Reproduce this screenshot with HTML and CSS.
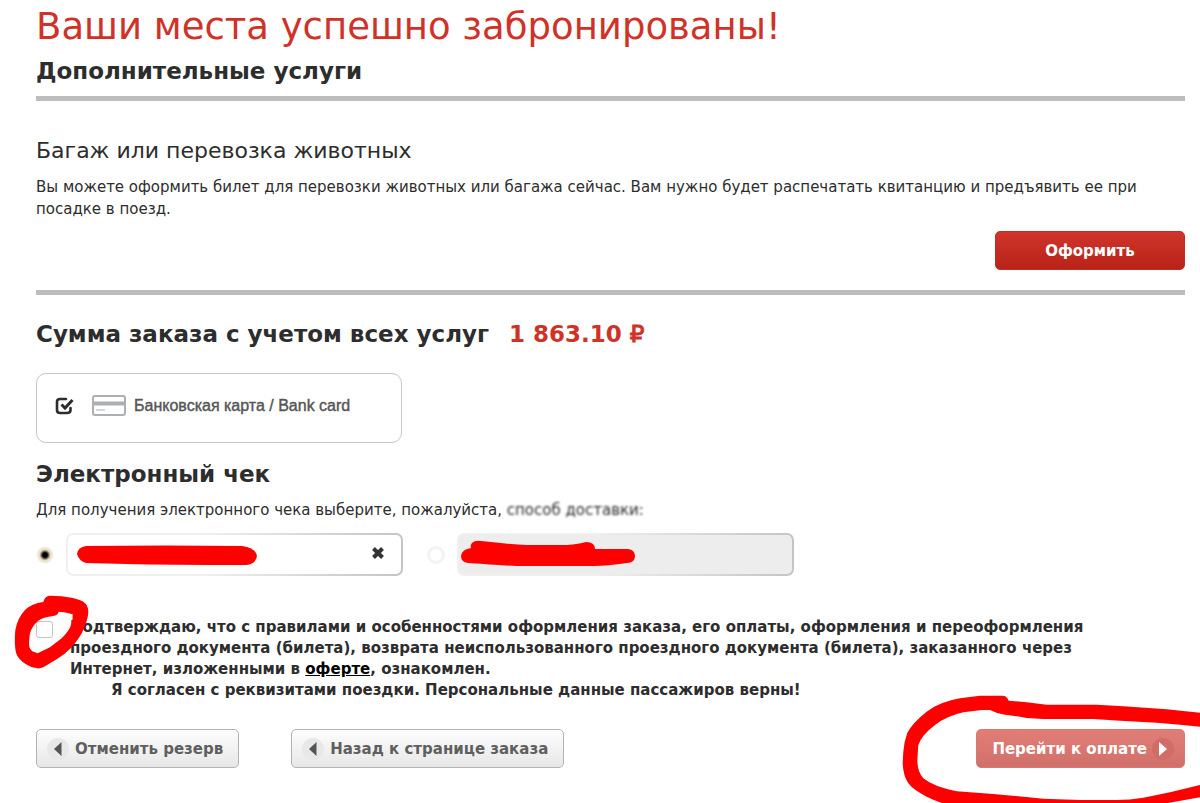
FILE: index.html
```html
<!DOCTYPE html>
<html lang="ru">
<head>
    <meta charset="UTF-8">
    <meta name="viewport" content="width=device-width, initial-scale=1.0">
    <title>Оплата заказа</title>
    <link rel="stylesheet" href="styles.css">
</head>
<body>
    <main class="page">
        <h1>Ваши места успешно забронированы!</h1>
        <h2>Дополнительные услуги</h2>

        <section class="extra">
            <h3>Багаж или перевозка животных</h3>
            <p>Вы можете оформить билет для перевозки животных или багажа сейчас. Вам нужно будет распечатать квитанцию и предъявить ее при посадке в поезд.</p>
            <div class="extra-actions">
                <button class="btn btn-red btn-wide" type="button">Оформить</button>
            </div>
        </section>

        <div class="total">
            <h2>Сумма заказа с учетом всех услуг</h2>
            <strong>1 863.10 <span class="rub">₽</span></strong>
        </div>

        <label class="bank-card">
            <input type="checkbox" class="bank-check" checked>
            <svg class="check-icon" width="20" height="18" viewBox="0 0 20 18" fill="none" stroke="#2d2d2d">
                <path d="M11 2H5Q2 2 2 5V13Q2 16 5 16H12Q15.500 16 15.500 13V11" stroke-width="2.600" stroke-linecap="round"/>
                <path d="M6.500 7.500L10 11L17.500 3" stroke-width="3"/>
            </svg>
            <svg class="card-icon" width="34" height="21" viewBox="0 0 34 21">
                <rect x="1" y="1" width="32" height="19" rx="2" fill="#fff" stroke="#adafb2" stroke-width="2"/>
                <path d="M2 8.500H32" stroke="#adafb2" stroke-width="4"/>
                <path d="M4 15H13" stroke="#c9cacc" stroke-width="1.500"/>
            </svg>
            <span>Банковская карта / Bank card</span>
        </label>

        <h2>Электронный чек</h2>
        <p class="hint">Для получения электронного чека выберите, пожалуйста, <span class="soft">способ доставки:</span></p>

        <div class="delivery">
            <div class="option">
                <input type="radio" name="delivery" class="radio" aria-label="Первый способ" checked>
                <div class="field">
                    <input type="text" class="text-input" aria-label="Первый адрес">
                    <button class="clear" type="button" aria-label="Очистить">
                        <svg width="14" height="14" viewBox="0 0 14 14"><path d="M2.500 2.500L11.500 11.500M11.500 2.500L2.500 11.500" stroke="#333" stroke-width="4"/></svg>
                    </button>
                    <svg class="scribble" width="200" height="34" viewBox="0 0 200 34">
                        <path d="M20 13Q100 12 176 13Q190 15 191 23Q190 31 180 32Q100 32 60 31L20 30Q13 28 11 21Q12 14 20 13Z" fill="#f00"/>
                    </svg>
                </div>
            </div>
            <div class="option">
                <input type="radio" name="delivery" class="radio" aria-label="Второй способ">
                <div class="field">
                    <input type="text" class="text-input disabled" aria-label="Второй адрес" disabled>
                    <svg class="scribble" width="200" height="34" viewBox="0 0 200 34">
                        <path d="M15 10Q18 7 24 8Q50 11 70 12H110Q122 11 129 9Q138 9 138 16H171Q178 17 178 23Q178 30 170 30Q150 33 137 33H60Q37 32 27 31L11 30Q4 29 4 23Q5 16 14 15Q13 12 15 10Z" fill="#f00"/>
                    </svg>
                </div>
            </div>
        </div>

        <div class="agree">
            <input type="checkbox" id="agree" class="agree-check">
            <div class="agree-text">
                <label for="agree">Подтверждаю, что с правилами и особенностями оформления заказа, его оплаты, оформления и переоформления проездного документа (билета), возврата неиспользованного проездного документа (билета), заказанного через Интернет, изложенными в <a href="#offer">оферте</a>, ознакомлен.</label>
                <p>Я согласен с реквизитами поездки. Персональные данные пассажиров верны!</p>
            </div>
            <svg class="mark-check" width="90" height="80" viewBox="0 0 270 240">
                <path fill="#f00" fill-rule="evenodd" d="M133 28Q138 18 150 17Q185 17 215 23Q240 28 251 36Q266 46 265 68Q263 93 246 128Q234 150 212 175Q193 195 170 208L135 229Q125 236 112 235Q92 233 78 223Q53 206 48 188Q42 160 46 120Q52 85 75 60Q95 40 130 36ZM160 78Q130 82 115 92Q96 108 90 130Q86 155 88 170Q90 179 97 184L113 190L150 172L185 145Q208 122 213 105Q220 88 218 73Q195 65 176 65Q173 76 160 78Z"/>
            </svg>
        </div>

        <div class="actions">
            <button class="btn btn-grey" type="button">
                <svg width="22" height="22" viewBox="0 0 22 22"><circle cx="11" cy="11" r="11" fill="#e8e8e8"/><path d="M14.500 4V18L7 11Z" fill="#555"/></svg>
                Отменить резерв
            </button>
            <button class="btn btn-grey" type="button">
                <svg width="22" height="22" viewBox="0 0 22 22"><circle cx="11" cy="11" r="11" fill="#e8e8e8"/><path d="M14.500 4V18L7 11Z" fill="#555"/></svg>
                Назад к странице заказа
            </button>
            <div class="pay">
                <button class="btn btn-pay" type="button">
                    Перейти к оплате
                    <svg width="22" height="22" viewBox="0 0 22 22"><circle cx="11" cy="11" r="11" fill="#d16c66"/><path d="M7 4V18L15 11Z" fill="#fff"/></svg>
                </button>
                <svg class="mark-pay" width="320" height="123" viewBox="0 0 960 369">
                    <path fill="#f00" d="M960 98L860 88L730 79L650 74H500L440 67L386 62Q380 47 368 47H300L240 55Q180 65 140 95Q98 128 82 158Q72 185 70 215L68 250Q70 290 85 310Q100 330 140 350Q175 367 205 375H830L960 352V315L870 337L790 353Q750 360 710 360H600L490 356L340 342L230 334Q160 320 130 295Q112 275 112 240L115 195Q125 165 165 135Q200 108 250 97L305 90H330Q350 101 375 104Q400 106 440 114L490 117H640L720 122L830 128L900 134L960 140Z"/>
                </svg>
            </div>
        </div>
    </main>
</body>
</html>
```
FILE: styles.css
```css
* {
    box-sizing: border-box;
}

body {
    font-family: "DejaVu Sans", Verdana, sans-serif;
    font-size: 15px;
    line-height: 22px;
    margin: 0;
    color: #2d2d2d;
    background-color: #fff;
    overflow: hidden;
}

.page {
    padding: 3px 15px 35px 36px;
}

h1, h2, h3, p {
    margin: 0;
}

h1 {
    font-size: 37px;
    line-height: 48px;
    font-weight: normal;
    color: #d03228;
}

h2 {
    font-size: 23px;
    line-height: 40px;
    font-weight: bold;
}

h3 {
    font-size: 22px;
    line-height: 40px;
    font-weight: normal;
    margin-bottom: 5px;
}

.extra {
    margin-top: 5px;
    padding: 30px 0 20px;
    border-top: 5px solid #bdbdbd;
    border-bottom: 5px solid #bdbdbd;
}

.extra-actions {
    display: flex;
    justify-content: flex-end;
    margin-top: 11px;
}

.btn {
    display: flex;
    align-items: center;
    justify-content: center;
    gap: 6px;
    height: 39px;
    padding: 0 15px 0 10px;
    border-radius: 5px;
    font-family: inherit;
    font-size: 15px;
    font-weight: bold;
    white-space: nowrap;
    cursor: pointer;
}

.btn-red {
    padding: 0 10px;
    color: #fff;
    border: 1px solid #c5291f;
    background: linear-gradient(#d0342b, #b82318);
}

.btn-wide {
    width: 190px;
}

.btn-grey {
    color: #5f5f5f;
    border: 1px solid #b3b3b3;
    background: linear-gradient(#fdfdfd, #e7e7e7);
}

.btn-pay {
    gap: 5px;
    color: #fff;
    padding: 0 10px 0 15px;
    border: 1px solid #dc7770;
    background: linear-gradient(#e27d77, #d0706a);
}

.total {
    display: flex;
    align-items: center;
    gap: 20px;
    margin: 19px 0;
}

.total strong {
    font-size: 23px;
    color: #d03228;
}

.rub {
    font-weight: normal;
    -webkit-text-stroke: 1px #d03228;
}

.bank-card {
    display: flex;
    align-items: center;
    position: relative;
    width: 366px;
    height: 70px;
    margin-bottom: 11px;
    padding: 0 18px 5px;
    border: 1px solid #c6c6c6;
    border-radius: 10px;
    font-family: "Liberation Sans", Arial, sans-serif;
    font-size: 16px;
    color: #555;
    -webkit-text-stroke: 0.4px #555;
}

.bank-check {
    position: absolute;
    opacity: 0;
}

.card-icon {
    margin: 0 8px 0 17px;
}

.soft {
    filter: blur(1px);
}

.hint {
    margin-top: 5px;
}

.delivery {
    display: flex;
    gap: 24px;
    margin-top: 12px;
}

.option {
    display: flex;
    align-items: center;
    gap: 12px;
}

.radio {
    appearance: none;
    width: 18px;
    height: 18px;
    margin: 0;
    border: 3px solid #f3f3f3;
    border-radius: 50%;
}

.radio:checked {
    border: 0;
    background: radial-gradient(circle closest-side, #000 25%, #897f6d 45%, #e6dcc4 60%, #efe8d8 80%, #fff 100%);
}

.field {
    position: relative;
}

.text-input {
    display: block;
    width: 337px;
    height: 43px;
    padding: 0 40px 0 12px;
    border: 2px solid transparent;
    border-radius: 7px;
    font: inherit;
    background: linear-gradient(#fff, #fff) padding-box, linear-gradient(90deg, #f0f0f0 40%, #c4c4c4) border-box;
}

.text-input.disabled {
    background: linear-gradient(#ededed, #ededed) padding-box, linear-gradient(90deg, #f0f0f0 40%, #c4c4c4) border-box;
}

.clear {
    position: absolute;
    right: 18px;
    top: 13px;
    width: 14px;
    height: 14px;
    padding: 0;
    border: 0;
    background: none;
}

.clear svg {
    display: block;
}

.scribble {
    position: absolute;
    left: 0;
    top: 0;
    pointer-events: none;
}

.agree {
    display: flex;
    position: relative;
    gap: 17px;
    margin-top: 41px;
    padding-right: 30px;
    font-weight: bold;
    line-height: 21px;
}

.agree-check {
    appearance: none;
    flex: none;
    width: 17px;
    height: 17px;
    margin: 4px 0 0;
    border: 1px solid #c4c4c4;
    border-radius: 3px;
    background-color: #fff;
}

.agree-text p {
    padding-left: 41px;
}

.agree a {
    color: #000;
}

/* hand-drawn marks over the controls */
.mark-check {
    position: absolute;
    left: -36px;
    top: -27px;
    pointer-events: none;
}

.actions {
    display: flex;
    margin-top: 28px;
    gap: 52px;
}

.pay {
    position: relative;
    margin-left: auto;
}

.mark-pay {
    position: absolute;
    right: -15px;
    top: -49px;
    pointer-events: none;
}
```
